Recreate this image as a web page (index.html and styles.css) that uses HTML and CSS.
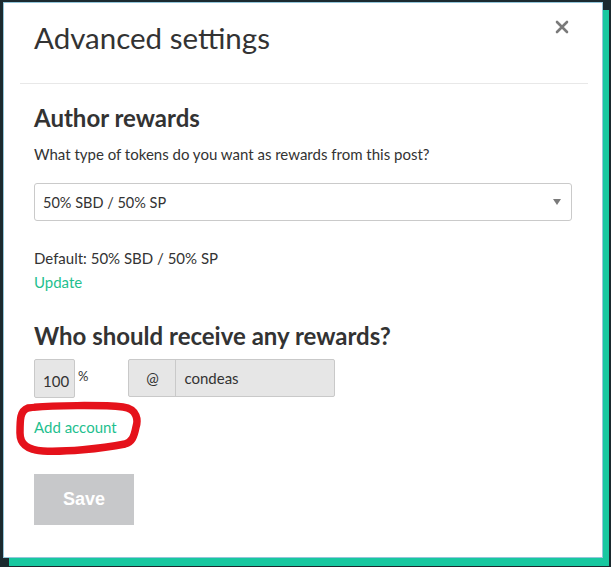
FILE: index.html
```html
<!DOCTYPE html>
<html lang="en">
<head>
    <meta charset="UTF-8">
    <title>Advanced settings</title>
    <link rel="stylesheet" href="styles.css">
</head>
<body>
    <div class="page">
        <div class="modal">
            <button type="button" class="close" aria-label="Close">
                <svg width="14" height="14" viewBox="0 0 14 14"><path d="M2 2 L12 12 M12 2 L2 12" stroke="#7a7a7a" stroke-width="2.6" stroke-linecap="round"/></svg>
            </button>
            <div class="modal-head">
                <h3 class="modal-title">Advanced settings</h3>
            </div>
            <hr class="divider">
            <form class="modal-body">
                <h4 class="section-title">Author rewards</h4>
                <p class="hint">What type of tokens do you want as rewards from this post?</p>
                <div class="select">
                    <span>50% SBD / 50% SP</span>
                    <svg class="caret" width="8" height="6" viewBox="0 0 8 6"><polygon points="0,0 8,0 4,6" fill="#7a7a7a"/></svg>
                </div>
                <p class="default">Default: 50% SBD / 50% SP</p>
                <a class="link" href="#">Update</a>

                <h4 class="section-title who">Who should receive any rewards?</h4>
                <div class="beneficiary">
                    <input class="percent" type="text" value="100" readonly>
                    <span class="pct">%</span>
                    <div class="account">
                        <span class="addon">@</span>
                        <input class="account-name" type="text" value="condeas" readonly>
                    </div>
                </div>
                <div class="add-row">
                    <a class="link" href="#">Add account</a>
                    <!-- hand drawn marker round the link -->
                    <svg class="marker" width="140" height="64" viewBox="0 0 140 64">
                        <path d="M18 11 C 40 8, 95 8, 113 10 C 128 12, 128 24, 126 30 C 124 40, 122 45, 115 47 C 90 52, 55 55, 33 54 C 18 53, 10 48, 10 36 C 10 22, 10 14, 18 11 Z" fill="none" stroke="#e5121b" stroke-width="7.5" stroke-linejoin="round"/>
                    </svg>
                </div>
                <button type="button" class="save">Save</button>
            </form>
        </div>
    </div>
</body>
</html>
```

FILE: styles.css
```css
body {
    margin: 0;
    background-color: #1b2a2f;
    font-family: Lato, "Noto Sans", sans-serif;
    color: #333;
}

.page {
    height: 567px;
    padding: 2px 0 0 3px;
    box-sizing: border-box;
}

.modal {
    position: relative;
    width: 600px;
    height: 556px;
    box-sizing: border-box;
    background-color: #fff;
    border: 1px solid #93c6da;
    box-shadow: 6px 8px 0 #18c8a0;
}

.close {
    position: absolute;
    top: 17px;
    right: 33px;
    padding: 0;
    border: 0;
    background: none;
}

.modal-head {
    padding: 15px 30px 0;
}

.modal-title {
    margin: 0;
    font-size: 29.5px;
    font-weight: 400;
    line-height: 40px;
}

.divider {
    margin: 25px 14px 0 16px;
    border: 0;
    border-top: 1px solid #e8e8e8;
}

.modal-body {
    padding: 0 30px;
}

.section-title {
    margin: 19px 0 0;
    font-size: 24px;
    font-weight: 700;
    line-height: 30px;
}

.hint {
    margin: 10px 0 0;
    font-size: 15px;
    line-height: 22px;
}

.select {
    display: flex;
    align-items: center;
    justify-content: space-between;
    height: 38px;
    margin-top: 18px;
    padding: 0 10px 0 8px;
    box-sizing: border-box;
    border: 1px solid #cacaca;
    border-radius: 3px;
    font-size: 14.5px;
}

.default {
    margin: 25px 0 0;
    font-size: 15px;
    line-height: 24px;
}

.link {
    display: inline-block;
    font-size: 15px;
    line-height: 24px;
    color: #1fbf8f;
    text-decoration: none;
}

.who {
    margin-top: 27px;
}

.beneficiary {
    display: flex;
    align-items: flex-start;
    margin-top: 8px;
}

.percent {
    width: 41px;
    height: 39px;
    padding: 4px 0 0 8px;
    box-sizing: border-box;
    border: 1px solid #c9c9c9;
    border-radius: 2px;
    background-color: #e6e6e6;
    font: 15px Lato, "Noto Sans", sans-serif;
    color: #333;
}

.pct {
    margin: 9px 0 0 3px;
    font-size: 13px;
}

.account {
    display: flex;
    height: 36px;
    margin-left: 40px;
    border: 1px solid #c9c9c9;
    border-radius: 2px;
    background-color: #e6e6e6;
}

.addon {
    display: flex;
    align-items: center;
    justify-content: center;
    width: 46px;
    border-right: 1px solid #c9c9c9;
    font-size: 15px;
}

.account-name {
    width: 158px;
    padding: 0 8px;
    box-sizing: border-box;
    border: 0;
    background: none;
    font: 15px Lato, "Noto Sans", sans-serif;
    color: #333;
}

.add-row {
    position: relative;
    margin-top: 17px;
}

.marker {
    position: absolute;
    top: -18px;
    left: -24px;
}

.save {
    display: block;
    width: 100px;
    height: 51px;
    margin-top: 35px;
    border: 0;
    background-color: #c7c8ca;
    color: #fff;
    font: 700 18px "Liberation Sans", Arial, sans-serif;
}
```
